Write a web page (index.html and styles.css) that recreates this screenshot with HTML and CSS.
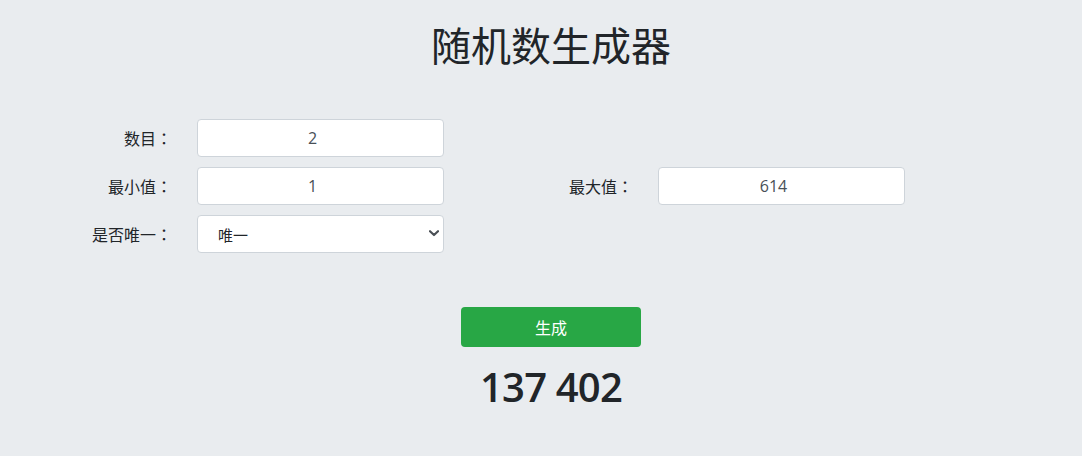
FILE: index.html
```html
<!DOCTYPE html>
<html lang="zh-CN">
<head>
<meta charset="utf-8">
<title>随机数生成器</title>
<link rel="stylesheet" href="styles.css">
</head>
<body>
<main class="page">
  <h1 class="title">随机数生成器</h1>
  <form class="form">
    <label class="label r1 c1" for="count">数目<span class="colon">：</span></label>
    <input class="field r1 c2" id="count" type="text" value="2">
    <label class="label r2 c1" for="min">最小值<span class="colon">：</span></label>
    <input class="field r2 c2" id="min" type="text" value="1">
    <label class="label r2 c3" for="max">最大值<span class="colon">：</span></label>
    <input class="field r2 c4" id="max" type="text" value="614">
    <label class="label r3 c1" for="unique">是否唯一<span class="colon">：</span></label>
    <div class="select-wrap r3 c2">
      <select class="field select" id="unique">
        <option>唯一</option>
        <option>不唯一</option>
      </select>
      <svg class="chevron" width="10" height="7" viewBox="0 0 10 7"><path d="M1 1.2 L5 5 L9 1.2" fill="none" stroke="#4a4f55" stroke-width="2.2" stroke-linecap="round" stroke-linejoin="round"/></svg>
    </div>
  </form>
  <div class="actions">
    <button class="btn" type="button">生成</button>
    <div class="result">137 402</div>
  </div>
</main>
</body>
</html>
```
FILE: styles.css
```css
html, body {
  margin: 0;
  padding: 0;
  background: #e9ecef;
}
body {
  font-family: "Noto Sans", "Noto Sans CJK SC", sans-serif;
  color: #212529;
}
.page {
  width: 1082px;
  height: 456px;
  overflow: hidden;
}
.title {
  margin: 16px 0 0 20px;
  text-align: center;
  font-family: "Noto Sans CJK SC", sans-serif;
  font-weight: 400;
  font-size: 40px;
  line-height: 56px;
  color: #212529;
}
.form {
  margin-top: 47px;
  display: grid;
  grid-template-columns: 172px 247px 164px 247px;
  grid-template-rows: 38px 38px 38px;
  column-gap: 25px;
  row-gap: 10px;
}
.r1 { grid-row: 1; }
.r2 { grid-row: 2; }
.r3 { grid-row: 3; }
.c1 { grid-column: 1; }
.c2 { grid-column: 2; }
.c3 { grid-column: 3; }
.c4 { grid-column: 4; }
.label {
  display: flex;
  align-items: center;
  justify-content: flex-end;
  font-family: "Noto Sans CJK SC", sans-serif;
  font-size: 16px;
  color: #212529;
}
.colon {
  font-family: "Noto Sans CJK JP", "Noto Sans CJK SC", sans-serif;
}
.field {
  box-sizing: border-box;
  width: 247px;
  height: 38px;
  margin: 0;
  border: 1px solid #ced4da;
  border-radius: 4px;
  background: #fff;
  font-family: "Open Sans", "Noto Sans CJK SC", sans-serif;
  font-size: 16px;
  color: #495057;
  text-align: center;
  padding: 0 28px 0 12px;
  outline: none;
}
.select-wrap {
  position: relative;
  width: 247px;
  height: 38px;
}
.select {
  -webkit-appearance: none;
  appearance: none;
  text-align: left;
  padding: 0 30px 0 20px;
  font-family: "Noto Sans CJK SC", sans-serif;
  font-size: 15px;
  color: #212529;
}
.chevron {
  position: absolute;
  left: 232px;
  top: 15px;
  pointer-events: none;
}
.actions {
  display: flex;
  flex-direction: column;
  align-items: center;
  padding-left: 20px;
  margin-top: 54px;
}
.btn {
  width: 180px;
  height: 40px;
  border: none;
  border-radius: 4px;
  background: #28a745;
  color: #fff;
  font-family: "Noto Sans CJK SC", sans-serif;
  font-size: 16px;
  cursor: pointer;
}
.result {
  margin-top: 16px;
  font-family: "Open Sans", sans-serif;
  font-weight: 600;
  font-size: 40px;
  line-height: 48px;
  letter-spacing: -0.8px;
  color: #212529;
}
```
